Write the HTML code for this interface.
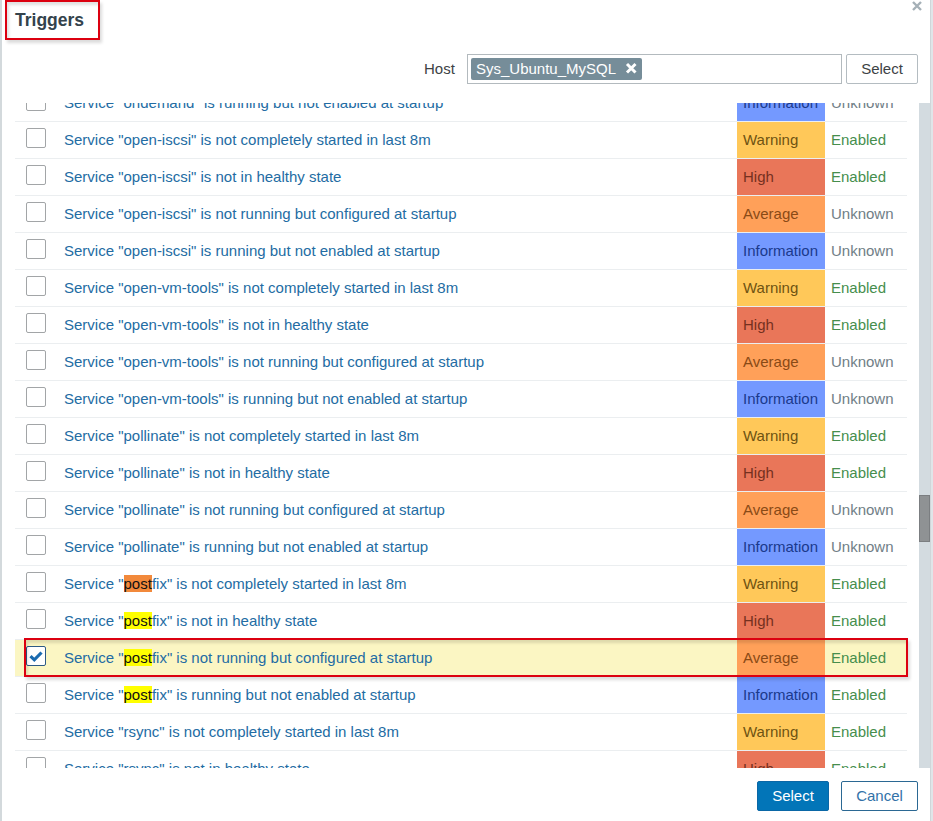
<!DOCTYPE html>
<html><head><meta charset="utf-8">
<style>
*{box-sizing:border-box;margin:0;padding:0}
html,body{width:933px;height:821px;overflow:hidden;background:#fff;font-family:"Liberation Sans",sans-serif;font-size:15px;color:#1f2c33}
.abs{position:absolute}
#lstrip{position:absolute;left:0;top:0;width:2px;height:821px;background:#d3d9dc}
#rstrip{position:absolute;left:930px;top:0;width:3px;height:821px;background:#e0e5e8;border-left:1px solid #d0d6d9}
#title{position:absolute;left:15px;top:10px;font-size:17.5px;font-weight:bold;color:#34434c;line-height:21px;white-space:nowrap}
#tbox{position:absolute;left:5px;top:0px;width:95px;height:40px;border:2px solid #dc0010;box-shadow:2px 3px 3px rgba(0,0,0,.14), inset 2px 3px 3px rgba(0,0,0,.12)}
#close{position:absolute;left:911px;top:0px;width:12px;height:12px}
#hostlbl{position:absolute;left:424px;top:60px;line-height:17px;color:#3d4245}
#inp{position:absolute;left:467px;top:54px;width:375px;height:30px;border:1px solid #b3babe;background:#fff}
#tag{position:absolute;left:471px;top:58px;width:171px;height:22px;background:#768d99;border-radius:2px;color:#fff}
#tag span{position:absolute;left:5px;top:2px;line-height:17px;white-space:nowrap}
#tagx{position:absolute;left:154px;top:4px}
.btn{position:absolute;height:30px;border-radius:2px;line-height:28px;text-align:center;white-space:nowrap}
#hsel{left:846px;top:54px;width:72px;border:1px solid #b4bcc1;background:#fff;color:#3d4245;border-radius:2px}
#list{position:absolute;left:0;top:103px;width:919px;height:665px;overflow:hidden}
.row{position:absolute;left:15px;width:892px;height:37px;border-bottom:1px solid #ebeef0}
.row.sel{background:#fbf6c3}
.cb{position:absolute;left:11px;top:6px;width:20px;height:20px;border:1px solid #a2a5a7;border-radius:2px;background:#fff}
.cb.on{border-color:#2d5a85}
.cb svg{position:absolute;left:-1px;top:-1px}
.nm{position:absolute;left:49px;top:9px;line-height:17px;white-space:nowrap;color:#236ca3}
.hly{background:#ffff00;color:#111}
.hlo{background:#f2893b;color:#111}
.sev{position:absolute;left:722px;top:0;width:88px;height:36px;padding-left:6px;line-height:17px;padding-top:9px}
.info{background:#7499ff;color:#1b3a8c}
.warn{background:#ffc859;color:#6e5312}
.high{background:#e97659;color:#75301f}
.avg{background:#ffa059;color:#8a4a16}
.st{position:absolute;left:816px;top:9px;line-height:17px}
.en{color:#468e4d}
.unk{color:#707e86}
#track{position:absolute;left:919px;top:103px;width:11px;height:665px;background:#d3dbe0}
#thumb{position:absolute;left:919px;top:495px;width:11px;height:47px;background:#8f9294;border:1px solid #7b7e81}
#rbox{position:absolute;left:24px;top:638px;width:884px;height:39px;border:2px solid #dc0010;box-shadow:2px 3px 3px rgba(0,0,0,.14), inset 2px 3px 3px rgba(0,0,0,.12)}
#fsel{left:757px;top:781px;width:72px;background:#0275b8;border:1px solid #0a67a6;color:#fff}
#fcan{left:841px;top:781px;width:77px;background:#fff;border:1px solid #2b6893;color:#3272a8}
</style></head><body>
<div id="lstrip"></div>
<div id="rstrip"></div>
<div id="title">Triggers</div>
<div id="tbox"></div>
<svg id="close" viewBox="0 0 12 12"><path d="M2 2 L10 10 M10 2 L2 10" stroke="#a5b0b7" stroke-width="2.4"/></svg>
<div id="hostlbl">Host</div>
<div id="inp"></div>
<div id="tag"><span>Sys_Ubuntu_MySQL</span><svg id="tagx" width="12" height="12" viewBox="0 0 12 12"><path d="M2 2 L10.5 10.5 M10.5 2 L2 10.5" stroke="#fff" stroke-width="3"/></svg></div>
<div class="btn" id="hsel">Select</div>
<div id="list">
<div class="row" style="top:-18px"><div class="cb"></div><div class="nm">Service "ondemand" is running but not enabled at startup</div><div class="sev info">Information</div><div class="st unk">Unknown</div></div>
<div class="row" style="top:19px"><div class="cb"></div><div class="nm">Service "open-iscsi" is not completely started in last 8m</div><div class="sev warn">Warning</div><div class="st en">Enabled</div></div>
<div class="row" style="top:56px"><div class="cb"></div><div class="nm">Service "open-iscsi" is not in healthy state</div><div class="sev high">High</div><div class="st en">Enabled</div></div>
<div class="row" style="top:93px"><div class="cb"></div><div class="nm">Service "open-iscsi" is not running but configured at startup</div><div class="sev avg">Average</div><div class="st unk">Unknown</div></div>
<div class="row" style="top:130px"><div class="cb"></div><div class="nm">Service "open-iscsi" is running but not enabled at startup</div><div class="sev info">Information</div><div class="st unk">Unknown</div></div>
<div class="row" style="top:167px"><div class="cb"></div><div class="nm">Service "open-vm-tools" is not completely started in last 8m</div><div class="sev warn">Warning</div><div class="st en">Enabled</div></div>
<div class="row" style="top:204px"><div class="cb"></div><div class="nm">Service "open-vm-tools" is not in healthy state</div><div class="sev high">High</div><div class="st en">Enabled</div></div>
<div class="row" style="top:241px"><div class="cb"></div><div class="nm">Service "open-vm-tools" is not running but configured at startup</div><div class="sev avg">Average</div><div class="st unk">Unknown</div></div>
<div class="row" style="top:278px"><div class="cb"></div><div class="nm">Service "open-vm-tools" is running but not enabled at startup</div><div class="sev info">Information</div><div class="st unk">Unknown</div></div>
<div class="row" style="top:315px"><div class="cb"></div><div class="nm">Service "pollinate" is not completely started in last 8m</div><div class="sev warn">Warning</div><div class="st en">Enabled</div></div>
<div class="row" style="top:352px"><div class="cb"></div><div class="nm">Service "pollinate" is not in healthy state</div><div class="sev high">High</div><div class="st en">Enabled</div></div>
<div class="row" style="top:389px"><div class="cb"></div><div class="nm">Service "pollinate" is not running but configured at startup</div><div class="sev avg">Average</div><div class="st unk">Unknown</div></div>
<div class="row" style="top:426px"><div class="cb"></div><div class="nm">Service "pollinate" is running but not enabled at startup</div><div class="sev info">Information</div><div class="st unk">Unknown</div></div>
<div class="row" style="top:463px"><div class="cb"></div><div class="nm">Service "<span class="hlo">post</span>fix" is not completely started in last 8m</div><div class="sev warn">Warning</div><div class="st en">Enabled</div></div>
<div class="row" style="top:500px"><div class="cb"></div><div class="nm">Service "<span class="hly">post</span>fix" is not in healthy state</div><div class="sev high">High</div><div class="st en">Enabled</div></div>
<div class="row sel" style="top:537px"><div class="cb on"><svg width="20" height="20" viewBox="0 0 20 20"><path d="M4.5 10.2 L8.3 13.8 L15.5 6.5" fill="none" stroke="#1b6bb0" stroke-width="3.2"/></svg></div><div class="nm">Service "<span class="hly">post</span>fix" is not running but configured at startup</div><div class="sev avg">Average</div><div class="st en">Enabled</div></div>
<div class="row" style="top:574px"><div class="cb"></div><div class="nm">Service "<span class="hly">post</span>fix" is running but not enabled at startup</div><div class="sev info">Information</div><div class="st en">Enabled</div></div>
<div class="row" style="top:611px"><div class="cb"></div><div class="nm">Service "rsync" is not completely started in last 8m</div><div class="sev warn">Warning</div><div class="st en">Enabled</div></div>
<div class="row" style="top:648px"><div class="cb"></div><div class="nm">Service "rsync" is not in healthy state</div><div class="sev high">High</div><div class="st en">Enabled</div></div>
</div>
<div id="track"></div>
<div id="thumb"></div>
<div id="rbox"></div>
<div class="btn" id="fsel">Select</div>
<div class="btn" id="fcan">Cancel</div>
</body></html>
